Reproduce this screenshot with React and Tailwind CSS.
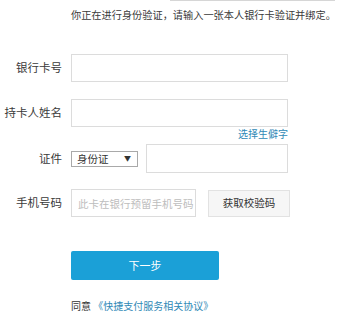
import { useState } from 'react'

const font = { fontFamily: '"Noto Sans CJK SC", "Liberation Sans", sans-serif' }

function Row({ label, children, className = '' }) {
  return (
    <div className={`flex items-center ${className}`}>
      <div className="w-[62px] shrink-0 text-right text-[11.5px] text-[#3a3a3a]">{label}</div>
      <div className="ml-[9px] flex items-center">{children}</div>
    </div>
  )
}

export default function App() {
  const [card, setCard] = useState('')
  const [name, setName] = useState('')
  const [idNo, setIdNo] = useState('')
  const [phone, setPhone] = useState('')

  return (
    <div className="w-[340px] h-[314px] bg-white overflow-hidden" style={font}>
      {/* border of the panel above */}
      <div className="ml-[170px] w-[165px] h-px bg-[#d6d6d6]" />

      <p className="mt-[7px] pl-[71px] pr-1 text-[10.2px] leading-[14px] text-[#3a3a3a]">
        你正在进行身份验证，请输入一张本人银行卡验证并绑定。
      </p>

      <Row label="银行卡号" className="mt-[32px]">
        <input
          value={card}
          onChange={e => setCard(e.target.value)}
          className="w-[217px] h-[28px] border border-[#dcdcdc] px-2 text-[11px] outline-none"
        />
      </Row>

      <Row label="持卡人姓名" className="mt-[17px]">
        <input
          value={name}
          onChange={e => setName(e.target.value)}
          className="w-[217px] h-[28px] border border-[#dcdcdc] px-2 text-[11px] outline-none"
        />
      </Row>

      <div className="mt-px w-[288px] text-right text-[10px] leading-[12px] text-[#2f89b6]">选择生僻字</div>

      <Row label="证件" className="mt-[4px]">
        <div className="w-[67px] h-[16px] border border-[#a9a9a9] flex items-center justify-between pl-[5px] pr-[6px] text-[10.5px] text-[#333]">
          <span>身份证</span>
          <span className="text-[7px]">▼</span>
        </div>
        <input
          value={idNo}
          onChange={e => setIdNo(e.target.value)}
          className="ml-[8px] w-[142px] h-[29px] border border-[#dcdcdc] px-2 text-[11px] outline-none"
        />
      </Row>

      <Row label="手机号码" className="mt-[16px]">
        <input
          value={phone}
          onChange={e => setPhone(e.target.value)}
          placeholder="此卡在银行预留手机号码"
          className="w-[125px] h-[28px] border border-[#dcdcdc] pl-[6px] text-[10.5px] outline-none placeholder:text-[#bdbdbd]"
        />
        <button className="ml-[12px] w-[82px] h-[27px] border border-[#e2e2e2] bg-[#f6f6f6] text-[10.5px] text-[#333]">
          获取校验码
        </button>
      </Row>

      <button className="mt-[34px] ml-[71px] block w-[148px] h-[29px] rounded-[2px] bg-[#1ba0d7] text-[11px] text-white">
        下一步
      </button>

      <p className="mt-[20px] pl-[71px] text-[10px] leading-[12px] text-[#333]">
        同意 <span className="text-[#2f89b6]">《快捷支付服务相关协议》</span>
      </p>
    </div>
  )
}
